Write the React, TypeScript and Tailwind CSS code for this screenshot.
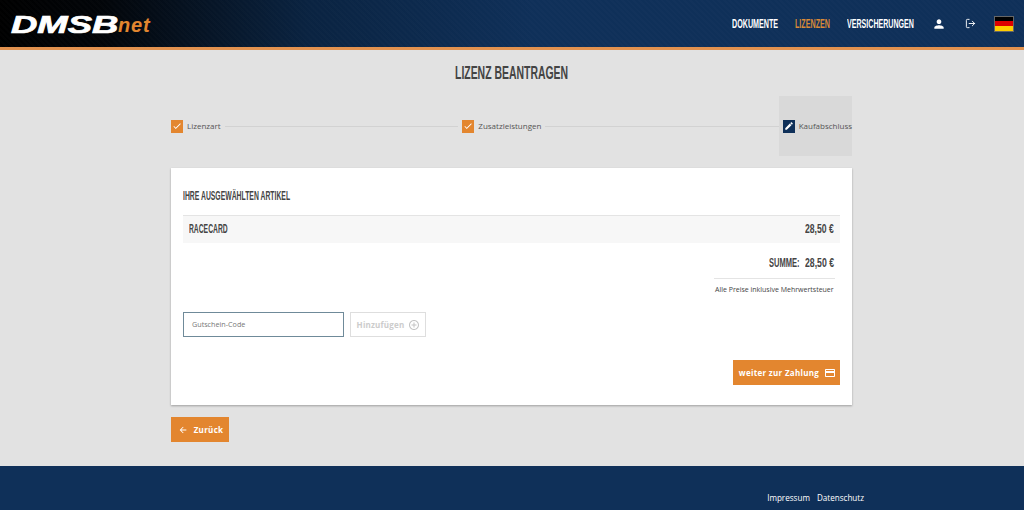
import React from "react";
import { LogOut } from "lucide-react";
import { MdAddCircleOutline, MdArrowBack, MdCheck, MdCreditCard, MdEdit, MdPerson } from "react-icons/md";

const head = "font-['Liberation_Sans',sans-serif] font-bold";

function Cond({ width, scale, children }: { width: string; scale: string; children: React.ReactNode }) {
  return (
    <span className={`inline-block whitespace-nowrap ${width}`}>
      <span className={`inline-block origin-left ${scale}`}>{children}</span>
    </span>
  );
}

function Step({ label, active }: { label: string; active?: boolean }) {
  return (
    <div className={`flex h-[60px] shrink-0 items-center gap-[4px] ${active ? "w-[73px] gap-[3px] bg-[#d9d9d9] pl-[4px]" : ""}`}>
      <span className={`flex h-[13px] w-[12px] items-center justify-center ${active ? "bg-[#0f3059]" : "bg-[#e3862f]"}`}>
        {active ? <MdEdit size={10} color="#fff" /> : <MdCheck size={10} color="#fff" />}
      </span>
      <span className="text-[8px] whitespace-nowrap text-[#555]">{label}</span>
    </div>
  );
}

export default function App() {
  return (
    <div className="flex h-[510px] w-[1024px] flex-col overflow-hidden bg-[#e2e2e2] font-['Open_Sans',sans-serif]">
      <header className="flex h-[50px] shrink-0 items-center justify-between border-b-[3px] border-[#e2924f] bg-[repeating-linear-gradient(45deg,rgba(255,255,255,0.01)_0px,rgba(255,255,255,0.01)_2px,transparent_2px,transparent_4px),linear-gradient(90deg,#000_0%,#020509_10%,#0a2341_30%,#0f3059_52%,#0f3059_100%)] pr-[10px] pl-[11px]">
        <div className="flex items-end pt-[2px]">
          <span className="inline-block w-[107px] origin-left scale-x-[1.52] text-[24px] leading-[20px] font-bold text-white italic [-webkit-text-stroke:0.7px_white] font-['Liberation_Sans',sans-serif]">DMSB</span>
          <span className="text-[20px] leading-[19px] font-bold tracking-[0.8px] text-[#e3862f] italic font-['Liberation_Sans',sans-serif]">net</span>
        </div>
        <nav className={`flex items-center text-[13px] text-white ${head}`}>
          <Cond width="w-[47px]" scale="scale-x-[0.55]">DOKUMENTE</Cond>
          <span className="ml-[16px] text-[#d98a38]">
            <Cond width="w-[36px]" scale="scale-x-[0.55]">LIZENZEN</Cond>
          </span>
          <span className="ml-[16px]">
            <Cond width="w-[68px]" scale="scale-x-[0.545]">VERSICHERUNGEN</Cond>
          </span>
          <MdPerson size={14} color="#fff" className="ml-[17px]" />
          <LogOut size={11} color="#fff" className="ml-[19px]" />
          <span className="ml-[18px] flex h-[16px] w-[20px] flex-col border border-[#666]">
            <span className="flex-1 bg-black" />
            <span className="flex-1 bg-[#d00]" />
            <span className="flex-1 bg-[#ffce00]" />
          </span>
        </nav>
      </header>

      <main className="flex flex-1 flex-col items-center pr-px">
        <h1 className={`mt-[13px] text-[18px] leading-[20px] text-[#444] ${head}`}>
          <Cond width="w-[113px]" scale="scale-x-[0.58]">LIZENZ BEANTRAGEN</Cond>
        </h1>

        <div className="mt-[13px] flex h-[60px] w-[681px] shrink-0 items-center">
          <Step label="Lizenzart" />
          <div className="mx-[4px] h-px flex-1 bg-[#d2d2d2]" />
          <Step label="Zusatzleistungen" />
          <div className="ml-[4px] h-px flex-1 bg-[#d2d2d2]" />
          <Step label="Kaufabschluss" active />
        </div>

        <section className="mt-[12px] flex h-[237px] w-[681px] shrink-0 flex-col bg-white px-[12px] pt-[21px] shadow-[0_1px_2px_rgba(0,0,0,0.3)]">
          <h2 className={`text-[12.5px] leading-[14px] text-[#444] ${head}`}>
            <Cond width="w-[107px]" scale="scale-x-[0.546]">IHRE AUSGEWÄHLTEN ARTIKEL</Cond>
          </h2>
          <div className={`mt-[12px] flex h-[28px] items-center justify-between border-t border-[#e4e4e4] bg-[#f7f7f7] px-[6px] text-[12.5px] text-[#444] ${head}`}>
            <Cond width="w-[39px]" scale="scale-x-[0.54]">RACECARD</Cond>
            <Cond width="w-[29px]" scale="scale-x-[0.69]">28,50 €</Cond>
          </div>
          <div className={`mt-[12px] flex justify-end gap-[6px] px-[6px] text-[13px] leading-[15px] text-[#444] ${head}`}>
            <Cond width="w-[30px]" scale="scale-x-[0.58]">SUMME:</Cond>
            <Cond width="w-[29px]" scale="scale-x-[0.67]">28,50 €</Cond>
          </div>
          <div className="mt-[8px] mr-[5px] flex justify-end">
            <div className="w-[121px] border-t border-[#e4e4e4] pt-[4px] pl-[1px] text-[7px] leading-[14px] whitespace-nowrap text-[#444]">Alle Preise inklusive Mehrwertsteuer</div>
          </div>
          <div className="mt-[15px] flex gap-[6px]">
            <div className="flex h-[25px] w-[161px] items-center border border-[#6f8a99] pl-[8px] text-[7.2px] text-[#777]">Gutschein-Code</div>
            <div className="flex h-[25px] w-[76px] items-center justify-center gap-[4px] border border-[#dedede] pl-[1px] text-[8px] font-bold tracking-[0.2px] text-[#ccc]">
              Hinzufügen
              <MdAddCircleOutline size={12} color="#c4c4c4" />
            </div>
          </div>
          <div className="mt-[23px] flex justify-end">
            <button className="flex h-[25px] w-[107px] items-center justify-center gap-[5px] bg-[#e3862f] pl-[2px] text-[8px] font-bold tracking-[0.3px] text-white">
              weiter zur Zahlung
              <MdCreditCard size={12} color="#fff" />
            </button>
          </div>
        </section>

        <div className="mt-[12px] w-[681px]">
          <button className="flex h-[25px] w-[58px] items-center justify-center gap-[6px] bg-[#e3862f] pl-[1px] text-[8px] font-bold tracking-[0.3px] text-white">
            <MdArrowBack size={10} color="#fff" />
            Zurück
          </button>
        </div>
      </main>

      <footer className="flex h-[44px] shrink-0 justify-end gap-[7px] bg-[#0f3059] pt-[25px] pr-[160px] text-[8.1px] leading-[13px] text-white">
        <span>Impressum</span>
        <span>Datenschutz</span>
      </footer>
    </div>
  );
}
